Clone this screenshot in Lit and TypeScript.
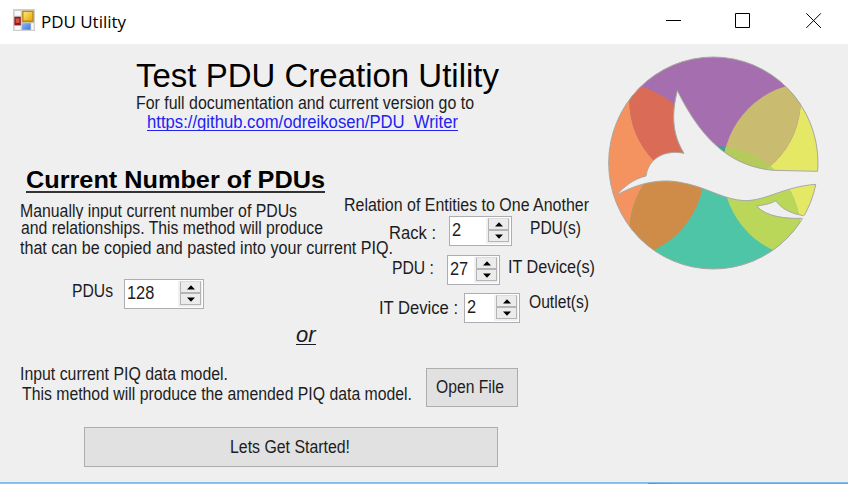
import { LitElement, html, css } from "lit";
import { customElement, property } from "lit/decorators.js";

/** A single line of text condensed or widened to an exact width. */
@customElement("fit-text")
class FitText extends LitElement {
  @property({ type: Number }) width = 0;

  static styles = css`
    :host { display: block; white-space: nowrap; }
    .ink { display: inline-block; transform-origin: 0 50%; }
  `;

  firstUpdated() {
    const ink = this.renderRoot.querySelector(".ink") as HTMLElement;
    this.style.width = `${this.width}px`;
    ink.style.transform = `scaleX(${this.width / ink.getBoundingClientRect().width})`;
  }

  render() {
    return html`<span class="ink"><slot></slot></span>`;
  }
}

@customElement("number-box")
class NumberBox extends LitElement {
  @property() value = "";

  static styles = css`
    :host {
      display: flex; box-sizing: border-box; height: 30px; padding: 1px;
      background: #fff; border: 1px solid #adadb3; color: #1c1c22;
    }
    .value { flex: 1; padding-left: 1px; line-height: 25px; }
    .spin { display: flex; flex-direction: column; width: 21px; padding: 0 1px 2px 2px; background: #f0f0f0; }
    .step {
      flex: 1; display: grid; place-items: center; background: #ececec;
      border: 1px solid #b4b4b4; border-top-color: #dcdcdc;
    }
    .step + .step { border-top: 1px solid #b4b4b4; }
    svg { display: block; }
  `;

  render() {
    return html`
      <div class="value"><fit-text width=${this.value.length * 9.1}>${this.value}</fit-text></div>
      <div class="spin">
        <div class="step"><svg width="8" height="5" viewBox="0 0 8 5"><path d="M0 4.6 4 .2 8 4.6z" /></svg></div>
        <div class="step"><svg width="8" height="5" viewBox="0 0 8 5"><path d="M0 .4 4 4.8 8 .4z" /></svg></div>
      </div>
    `;
  }
}

@customElement("app-root")
class AppRoot extends LitElement {
  static styles = css`
    :host {
      display: flex; flex-direction: column; box-sizing: border-box;
      width: 848px; height: 484px; overflow: hidden; background: #efefef;
      font: 17.5px/19px "Liberation Sans", Arial, sans-serif; color: #1c1c22;
    }
    .titlebar { display: flex; height: 44px; background: #fff; color: #000; flex: none; }
    .app-icon { margin: 9px 0 0 13px; }
    .caption { margin: 10px auto 0 6px; font: 17px/24px "Open Sans", "Noto Sans", sans-serif; }
    .controls { display: block; }
    .body { flex: 1; display: grid; grid-template-columns: 600px 248px; min-height: 0; }
    .logo { margin-top: 6px; }
    .edge { flex: none; height: 1px; background: #80bcf2; }
    .edge.low { background: linear-gradient(90deg, #b9b9b4 648px, #7d8ea5 648px, #9a9aa6 680px); }

    .intro { padding: 15px 0 0 136px; }
    .title { font-size: 32.5px; line-height: 34px; color: #000; }
    .sub { height: 18px; margin-top: 1px; line-height: 18px; }
    .link {
      box-sizing: border-box; height: 18px; margin: 1px 0 0 11px; line-height: 18px;
      overflow: hidden; color: #2222f4; border-bottom: 1px solid #2222f4;
    }
    .heading {
      box-sizing: border-box; height: 28px; margin: 34px 0 0 26px; line-height: 30px;
      font-size: 24px; font-weight: bold; color: #000; border-bottom: 2px solid #333;
    }
    .model { display: grid; grid-template-columns: 344px 256px; height: 135px; }
    .manual { padding: 9px 0 0 20px; }
    .manual .clip { height: 17px; overflow: hidden; }
    .manual .second { margin: 0 0 1px 1px; }
    .count { display: flex; margin: 21px 0 0 52px; }
    .count .label { margin: 3px 11px 0 0; }
    .count number-box { width: 80px; }

    .relations { padding-top: 3px; }
    .row { display: flex; }
    .row .label { margin-top: 8px; }
    .row .unit { margin-top: 3px; }
    .rack { margin: 1px 0 0 45px; }
    .rack number-box { width: 63px; margin: 0 18px 0 13px; }
    .pdu { margin: 9px 0 0 48px; }
    .pdu .label { margin-top: 4px; }
    .pdu number-box { width: 53px; margin: 0 8px 0 13px; }
    .device { margin: 8px 0 0 35px; }
    .device .label { margin-top: 6px; }
    .device .unit { margin-top: 0; }
    .device number-box { width: 56px; margin: 0 9px 0 6px; }

    .or {
      width: 20px; height: 21px; margin: -5px 0 0 296px; line-height: 24px;
      font-size: 22px; font-style: italic; border-bottom: 1px solid #1c1c22;
    }
    .file { display: flex; margin: 20px 0 0 20px; }
    .hint { width: 406px; }
    .hint .next { margin: 1px 0 0 2px; }
    .button {
      display: flex; box-sizing: border-box; justify-content: center; align-items: center;
      background: #e1e1e1; border: 1px solid #adadad;
    }
    .open { width: 92px; height: 39px; margin-top: 3px; padding-right: 4px; }
    .start { width: 414px; height: 40px; margin: 20px 0 0 84px; padding-right: 2px; }
  `;

  render() {
    return html`
      <div class="titlebar">
        <svg class="app-icon" width="22" height="22" viewBox="0 0 65 65">
          <defs>
            <linearGradient id="gold" x2="1" y2="1"><stop stop-color="#ffe47a" /><stop offset="1" stop-color="#e8a800" /></linearGradient>
            <linearGradient id="blue" x2="1" y2="1"><stop stop-color="#8db8f5" /><stop offset="1" stop-color="#3b78d8" /></linearGradient>
          </defs>
          <rect width="65" height="65" fill="#cfcfcf" />
          <path fill="#fafafa" d="M5 6h18v14H5zM5 50h18v11H5zM54 42h7v19h-7z" />
          <rect x="27" y="5" width="34" height="34" fill="#b98b10" />
          <rect x="31" y="9" width="26" height="25" fill="url(#gold)" />
          <rect x="4" y="23" width="19" height="25" fill="#94191c" />
          <rect x="8" y="28" width="11" height="13" fill="#d3544c" />
          <rect x="27" y="42" width="25" height="19" fill="url(#blue)" />
        </svg>
        <fit-text class="caption" width="85">PDU Utility</fit-text>
        <svg class="controls" width="208" height="44" fill="none" stroke="#000">
          <path d="M26 20.5h15M95.5 13.5h14v14h-14zM166.3 13.3l14.6 14.6M180.9 13.3l-14.6 14.6" />
        </svg>
      </div>
      <div class="body">
        <div class="form">
          <div class="intro">
            <fit-text class="title" width="363">Test PDU Creation Utility</fit-text>
            <fit-text class="sub" width="338">For full documentation and current version go to</fit-text>
            <fit-text class="link" width="311">https://github.com/odreikosen/PDU_Writer</fit-text>
          </div>
          <fit-text class="heading" width="299">Current Number of PDUs</fit-text>
          <div class="model">
            <div class="manual">
              <fit-text class="clip" width="277">Manually input current number of PDUs</fit-text>
              <fit-text class="second" width="302">and relationships. This method will produce</fit-text>
              <fit-text width="373">that can be copied and pasted into your current PIQ.</fit-text>
              <div class="count">
                <fit-text class="label" width="41">PDUs</fit-text>
                <number-box value="128"></number-box>
              </div>
            </div>
            <div class="relations">
              <fit-text width="245">Relation of Entities to One Another</fit-text>
              <div class="row rack">
                <fit-text class="label" width="47">Rack :</fit-text>
                <number-box value="2"></number-box>
                <fit-text class="unit" width="51">PDU(s)</fit-text>
              </div>
              <div class="row pdu">
                <fit-text class="label" width="42">PDU :</fit-text>
                <number-box value="27"></number-box>
                <fit-text class="unit" width="87">IT Device(s)</fit-text>
              </div>
              <div class="row device">
                <fit-text class="label" width="79">IT Device :</fit-text>
                <number-box value="2"></number-box>
                <fit-text class="unit" width="60">Outlet(s)</fit-text>
              </div>
            </div>
          </div>
          <div class="or">or</div>
          <div class="file">
            <div class="hint">
              <fit-text width="208">Input current PIQ data model.</fit-text>
              <fit-text class="next" width="390">This method will produce the amended PIQ data model.</fit-text>
            </div>
            <div class="button open"><fit-text width="68">Open File</fit-text></div>
          </div>
          <div class="button start"><fit-text width="120">Lets Get Started!</fit-text></div>
        </div>
        <svg class="logo" width="230" height="230" viewBox="0 0 690 690">
          <defs>
            <clipPath id="disc"><ellipse cx="340" cy="339" rx="314" ry="318" /></clipPath>
            <clipPath id="top"><circle cx="345" cy="152" r="257" /></clipPath>
            <clipPath id="bottom"><circle cx="345" cy="545" r="257" /></clipPath>
            <clipPath id="right"><circle cx="632" cy="362" r="264" /></clipPath>
          </defs>
          <g clip-path="url(#disc)">
            <circle cx="50" cy="362" r="263" fill="#f4935f" />
            <circle cx="632" cy="362" r="264" fill="#e4e864" />
            <circle cx="345" cy="545" r="257" fill="#4fc5a8" />
            <circle cx="345" cy="152" r="257" fill="#a56eae" />
            <g clip-path="url(#top)">
              <circle cx="50" cy="362" r="263" fill="#d96b57" />
              <circle cx="345" cy="545" r="257" fill="#3aa193" />
              <circle cx="632" cy="362" r="264" fill="#c9bb70" />
            </g>
            <g clip-path="url(#bottom)">
              <circle cx="50" cy="362" r="263" fill="#cf8c48" />
              <circle cx="632" cy="362" r="264" fill="#bbd75a" />
              <g clip-path="url(#right)"><circle cx="345" cy="152" r="257" fill="#b4ca5b" /></g>
            </g>
          </g>
          <ellipse cx="340" cy="339" rx="314" ry="318" fill="none" stroke="#a8a8a0" stroke-width="3" />
          <g fill="#efefef">
            <path d="M662 363L520 361C400 350 310 280 232 122C215 190 215 250 252 310C195 298 145 325 138 378C105 385 70 410 50 436C110 400 180 385 240 397C320 410 370 450 435 452C500 452 550 410 662 403Z" />
            <path d="M618 505C560 506 500 502 470 468Q510 463 528 452C542 475 570 490 618 498Z" />
            <g fill="none" stroke="#a8a8a0" stroke-width="3">
              <path d="M653 364L520 361C400 350 310 280 232 122C215 190 215 250 252 310C195 298 145 325 138 378C105 385 70 410 50 436C110 400 180 385 240 397C320 410 370 450 435 452C500 452 550 410 648 403" />
              <path d="M606 505C560 506 500 502 470 468Q510 463 528 452C542 475 570 490 610 497" />
            </g>
          </g>
        </svg>
      </div>
      <div class="edge"></div>
      <div class="edge low"></div>
    `;
  }
}
